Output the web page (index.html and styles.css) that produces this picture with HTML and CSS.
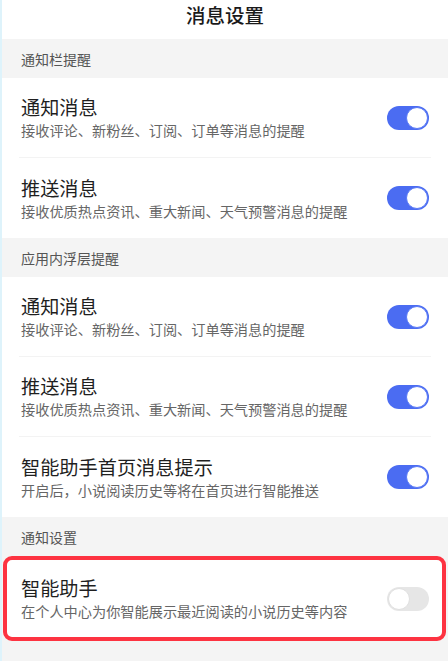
FILE: index.html
```html
<!DOCTYPE html>
<html lang="zh-CN">
<head>
    <meta charset="UTF-8">
    <meta name="viewport" content="width=device-width, initial-scale=1.0">
    <title>消息设置</title>
    <link rel="stylesheet" href="styles.css">
</head>
<body>
    <div class="page">
        <div class="header">消息设置</div>

        <!-- 通知栏提醒 -->
        <div class="section-title">通知栏提醒</div>
        <div class="group">
            <div class="row">
                <div class="row-text">
                    <div class="row-title">通知消息</div>
                    <div class="row-desc">接收评论、新粉丝、订阅、订单等消息的提醒</div>
                </div>
                <div class="switch on"><span class="knob"></span></div>
            </div>
            <div class="row">
                <div class="row-text">
                    <div class="row-title">推送消息</div>
                    <div class="row-desc">接收优质热点资讯、重大新闻、天气预警消息的提醒</div>
                </div>
                <div class="switch on"><span class="knob"></span></div>
            </div>
        </div>

        <!-- 应用内浮层提醒 -->
        <div class="section-title">应用内浮层提醒</div>
        <div class="group">
            <div class="row">
                <div class="row-text">
                    <div class="row-title">通知消息</div>
                    <div class="row-desc">接收评论、新粉丝、订阅、订单等消息的提醒</div>
                </div>
                <div class="switch on"><span class="knob"></span></div>
            </div>
            <div class="row">
                <div class="row-text">
                    <div class="row-title">推送消息</div>
                    <div class="row-desc">接收优质热点资讯、重大新闻、天气预警消息的提醒</div>
                </div>
                <div class="switch on"><span class="knob"></span></div>
            </div>
            <div class="row">
                <div class="row-text">
                    <div class="row-title">智能助手首页消息提示</div>
                    <div class="row-desc">开启后，小说阅读历史等将在首页进行智能推送</div>
                </div>
                <div class="switch on"><span class="knob"></span></div>
            </div>
        </div>

        <!-- 通知设置 -->
        <div class="section-title">通知设置</div>
        <div class="group highlight">
            <div class="row">
                <div class="row-text">
                    <div class="row-title">智能助手</div>
                    <div class="row-desc">在个人中心为你智能展示最近阅读的小说历史等内容</div>
                </div>
                <div class="switch"><span class="knob"></span></div>
            </div>
        </div>
    </div>
</body>
</html>
```

FILE: styles.css
```css
html, body {
    margin: 0;
    padding: 0;
}
body {
    font-family: "Noto Sans CJK SC", "Noto Sans", sans-serif;
    background-color: #f4f4f4;
    color: #222;
}
.page {
    min-height: 661px;
    border-left: 2px solid #def3fb;
    background: #f4f4f4;
}
.header {
    height: 39px;
    line-height: 30px;
    text-align: center;
    font-size: 19.5px;
    font-weight: 500;
    background: #fff;
    color: #1a1a1a;
}
.section-title {
    height: 39px;
    line-height: 40px;
    padding-left: 19px;
    font-size: 14px;
    color: #555;
}
.group {
    background: #fff;
}
.row {
    height: 80px;
    margin: 0 17px;
    padding: 0 2px;
    display: flex;
    align-items: center;
    justify-content: space-between;
    box-sizing: border-box;
    border-bottom: 1px solid #f3f3f3;
}
.row:last-child {
    border-bottom: none;
}
.row-title {
    font-size: 19.2px;
    line-height: 24px;
    color: #1f1f1f;
}
.row-desc {
    margin-top: 1px;
    font-size: 14.2px;
    line-height: 20px;
    color: #666;
}
.switch {
    width: 42px;
    height: 24px;
    border-radius: 12px;
    background: #e6e6e6;
    position: relative;
    flex-shrink: 0;
}
.switch .knob {
    position: absolute;
    top: 1px;
    left: 1px;
    width: 20px;
    height: 20px;
    border-radius: 50%;
    background: #fff;
    border: 1px solid #e0e0e0;
}
.switch.on {
    background: #4b6cf2;
}
.switch.on .knob {
    left: auto;
    right: 1px;
    border-color: #5a7af5;
}
.highlight {
    margin-left: 1px;
    width: 435px;
    height: 77px;
    border: 4px solid #fd3341;
    border-radius: 9px;
    display: flex;
    align-items: center;
}
.highlight .row {
    flex: 1;
    margin: 0 11px 0 12px;
}
```
